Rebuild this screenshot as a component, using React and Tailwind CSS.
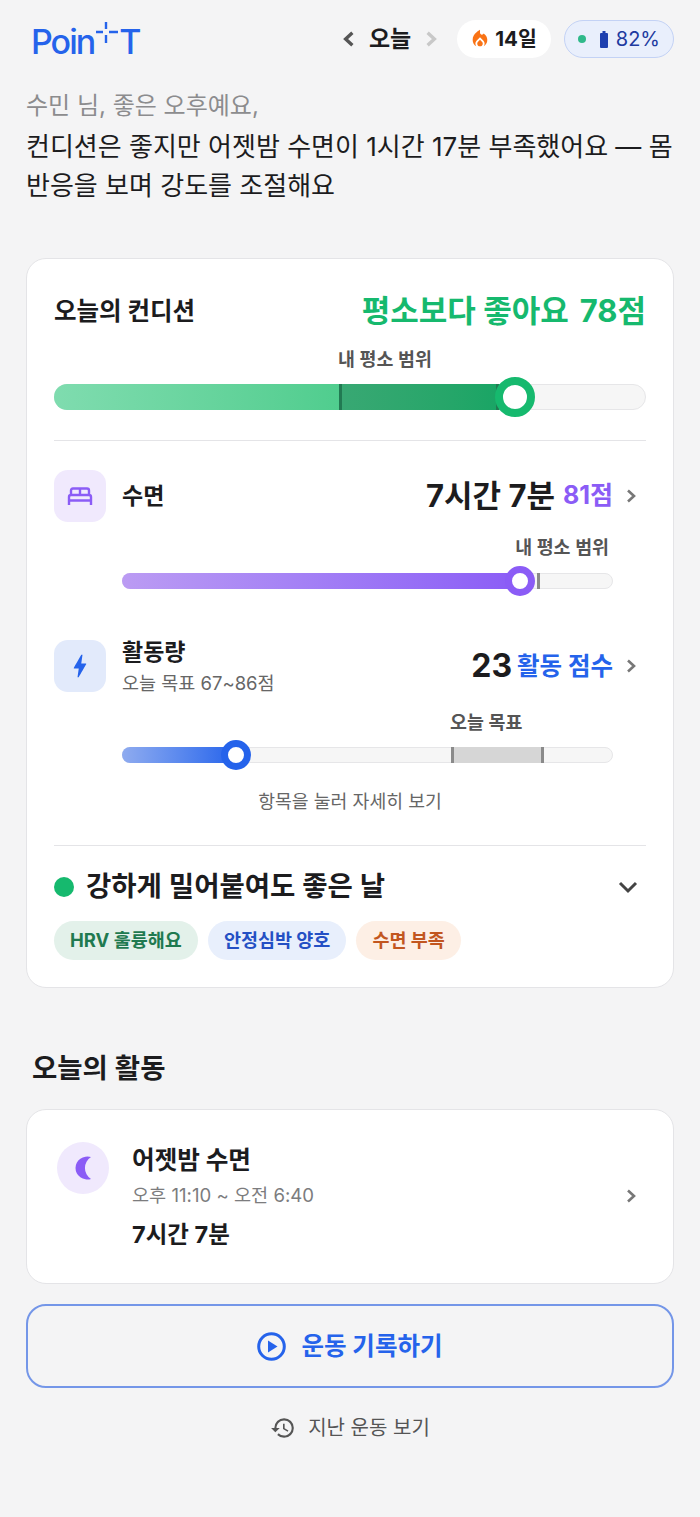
import React from 'react';
import {
    MdBolt,
    MdHistory,
    MdLocalFireDepartment,
} from 'react-icons/md';

const font = 'font-["Inter","Noto_Sans_CJK_KR",sans-serif]';

const Logo = () => (
    <div className="flex items-end h-[38px] translate-y-[3px] text-[#2563eb] text-[34px] leading-[38px] font-medium tracking-[-2px]">
        <span>Poin</span>
        <svg width="25" height="38" viewBox="0 0 25 38" className="shrink-0 mb-[3px]">
            <path d="M2 12H9M15 12H24M12 2V9M12 15V23" stroke="#2563eb" strokeWidth="2.4" fill="none" />
        </svg>
        <span>T</span>
    </div>
);

const Chevron = ({ color = '#777', className = '', w = 12, h = 16, sw = 2.6 }) => (
    <svg width={w} height={h} viewBox="0 0 12 16" className={`shrink-0 ${className}`}>
        <path d="M3 2.5L9 8L3 13.5" stroke={color} strokeWidth={sw} fill="none" />
    </svg>
);

const ExpandIcon = () => (
    <svg width="20" height="14" viewBox="0 0 20 14" className="ml-auto mr-[8px] shrink-0">
        <path d="M2 3L10 11L18 3" stroke="#444" strokeWidth="3" fill="none" />
    </svg>
);

const BatteryIcon = () => (
    <svg width="8" height="17" viewBox="0 0 8 17" className="shrink-0">
        <path d="M2.5 0H5.5V2H7Q8 2 8 3V16Q8 17 7 17H1Q0 17 0 16V3Q0 2 1 2H2.5Z" fill="#1e40af" />
    </svg>
);

const BedIcon = () => (
    <svg width="26" height="18" viewBox="0 0 26 18">
        <path
            d="M4 8V3.5Q4 1.5 6 1.5H20Q22 1.5 22 3.5V8M2 18V10Q2 8 4 8H22Q24 8 24 10V18M2 13.5H24M13 2V8"
            stroke="#8b5cf6"
            strokeWidth="2.4"
            fill="none"
        />
    </svg>
);

const MoonIcon = () => (
    <svg width="20" height="26" viewBox="0 0 20 26">
        <path d="M18 2A12 11.5 0 1 0 18 24A13 13 0 0 1 18 2Z" fill="#8b5cf6" />
    </svg>
);

const PlayIcon = () => (
    <svg width="29" height="29" viewBox="0 0 29 29" className="mr-[15px] shrink-0">
        <circle cx="14.5" cy="14.5" r="12.8" stroke="#2563eb" strokeWidth="3" fill="none" />
        <path d="M11 8.5L20.5 14.5L11 20.5Z" fill="#2563eb" />
    </svg>
);

const Thumb = ({ className }) => (
    <div className={`absolute top-1/2 -translate-y-1/2 -translate-x-1/2 rounded-full bg-white ${className}`} />
);

const App = () => {
    return (
        <div className={`${font} bg-[#f4f4f5] min-h-[1517px] px-[26px] pt-[20px] text-[#1c1c1e]`}>
            {/* top bar */}
            <header className="flex items-center justify-between h-[38px] pl-[5px]">
                <Logo />
                <div className="flex items-center">
                    <Chevron color="#555" w={14} h={18} sw={3} className="rotate-180" />
                    <span className="text-[23px] font-bold mx-[13px]">오늘</span>
                    <Chevron color="#c8c8c8" w={14} h={18} sw={3} />
                    <div className="flex items-center h-[38px] ml-[19px] pl-[12px] pr-[14px] rounded-full bg-white">
                        <MdLocalFireDepartment size={22} className="text-[#f97316]" />
                        <span className="text-[20.5px] font-bold ml-[4px]">14일</span>
                    </div>
                    <div className="flex items-center h-[38px] ml-[13px] px-[13px] rounded-full bg-[#e9effc] border border-[#c3d2f5]">
                        <span className="w-2 h-2 rounded-full bg-[#2fb98a] mr-[14px]" />
                        <BatteryIcon />
                        <span className="text-[20px] text-[#1e3a9f] ml-[8px]">82%</span>
                    </div>
                </div>
            </header>

            {/* greeting */}
            <div className="pt-[28px]">
                <p className="text-[24px] leading-[39px] text-[#8c8c8e]">수민 님, 좋은 오후예요,</p>
                <p className="text-[26px] leading-[39px] mt-[2px] whitespace-nowrap">
                    컨디션은 좋지만 어젯밤 수면이 1시간 17분 부족했어요 — 몸<br />
                    반응을 보며 강도를 조절해요
                </p>
            </div>

            {/* condition card */}
            <section className="mt-[53px] bg-white border border-[#e4e4e7] rounded-[20px] px-[27px] pt-[29px] h-[730px]">
                <div className="flex items-center justify-between h-[46px]">
                    <h2 className="text-[24.5px] font-bold">오늘의 컨디션</h2>
                    <div className="text-[31px] font-bold text-[#16b96e] flex gap-[11px]">
                        <span>평소보다 좋아요</span>
                        <span>78점</span>
                    </div>
                </div>
                <div className="mt-[13px] pl-[284px] text-[18.4px] leading-[24px] font-semibold text-[#555]">
                    내 평소 범위
                </div>
                <div className="relative mt-[13px] h-[26px] rounded-full bg-[#f6f6f6] border border-[#e6e6e8]">
                    <div className="absolute -inset-px right-auto w-[460px] rounded-full bg-gradient-to-r from-[#7fdcaf] to-[#22c47a]" />
                    <div className="absolute -top-px -bottom-px left-[284px] w-[160px] bg-gradient-to-r from-[#38a873] to-[#1aa565] border-x-[3px] border-[#217a52]" />
                    <Thumb className="left-[460px] w-[40px] h-[40px] border-[8px] border-[#16b96e]" />
                </div>
                <div className="mt-[30px] h-px bg-[#e4e4e7]" />

                {/* sleep */}
                <div className="flex items-start mt-[29px]">
                    <div className="w-[52px] h-[52px] rounded-[14px] bg-[#f0e9fd] flex items-center justify-center">
                        <BedIcon />
                    </div>
                    <span className="ml-[16px] text-[23px] leading-[52px] font-bold">수면</span>
                    <div className="ml-auto flex items-center h-[52px]">
                        <span className="text-[31px] font-bold">7시간 7분</span>
                        <span className="ml-[8px] text-[25px] font-bold text-[#8b5cf6]">81점</span>
                        <Chevron className="ml-[12px] mr-[9px]" />
                    </div>
                </div>
                <div className="ml-[68px] mr-[33px]">
                    <div className="text-right text-[18.4px] leading-[24px] font-semibold text-[#555] pr-[4px] mt-[13px]">내 평소 범위</div>
                    <div className="relative mt-[14px] h-[16px] rounded-full bg-[#f6f6f6] border border-[#e6e6e8]">
                        <div className="absolute -inset-px right-auto w-[397px] rounded-full bg-gradient-to-r from-[#bb9bf3] to-[#8b5cf6]" />
                        <div className="absolute -top-px -bottom-px left-[414px] w-[3px] bg-[#8a8a8a]" />
                        <Thumb className="left-[397px] w-[30px] h-[30px] border-[7px] border-[#8b5cf6]" />
                    </div>
                </div>

                {/* activity */}
                <div className="flex items-start mt-[51px]">
                    <div className="w-[52px] h-[52px] rounded-[14px] bg-[#e2eafb] flex items-center justify-center">
                        <MdBolt size={30} className="text-[#2563eb]" />
                    </div>
                    <div className="ml-[16px] -mt-[4px]">
                        <div className="text-[23px] leading-[32px] font-bold">활동량</div>
                        <div className="text-[18.5px] leading-[28px] mt-[1px] text-[#666]">오늘 목표 67~86점</div>
                    </div>
                    <div className="ml-auto flex items-center h-[52px]">
                        <span className="text-[32px] font-bold">23</span>
                        <span className="ml-[5px] text-[24.5px] font-bold text-[#2563eb]">활동 점수</span>
                        <Chevron className="ml-[12px] mr-[9px]" />
                    </div>
                </div>
                <div className="ml-[68px] mr-[33px]">
                    <div className="mt-[13px] pl-[328px] text-[18.4px] leading-[24px] font-semibold text-[#555] whitespace-nowrap">
                        오늘 목표
                    </div>
                    <div className="relative mt-[13px] h-[16px] rounded-full bg-[#f6f6f6] border border-[#e6e6e8]">
                        <div className="absolute -top-px -bottom-px left-[328px] w-[93px] bg-[#d6d6d6] border-x-[3px] border-[#8a8a8a]" />
                        <div className="absolute -inset-px right-auto w-[114px] rounded-full bg-gradient-to-r from-[#8fabef] to-[#2563eb]" />
                        <Thumb className="left-[113px] w-[30px] h-[30px] border-[7px] border-[#2563eb]" />
                    </div>
                </div>
                <div className="mt-[24px] text-center text-[18.3px] leading-[28px] text-[#666]">항목을 눌러 자세히 보기</div>
                <div className="mt-[30px] h-px bg-[#e4e4e7]" />

                {/* status */}
                <div className="flex items-center mt-[20px] h-[42px]">
                    <span className="w-5 h-5 rounded-full bg-[#16b96e]" />
                    <span className="ml-[12px] text-[27.5px] font-semibold">강하게 밀어붙여도 좋은 날</span>
                    <ExpandIcon />
                </div>
                <div className="flex gap-[10px] mt-[13px]">
                    <span className="h-[39px] leading-[39px] px-[16px] rounded-full bg-[#e3f1ea] text-[#1f7a50] text-[18.5px] font-bold">HRV 훌륭해요</span>
                    <span className="h-[39px] leading-[39px] px-[16px] rounded-full bg-[#e8effc] text-[#2450c4] text-[18.5px] font-bold">안정심박 양호</span>
                    <span className="h-[39px] leading-[39px] px-[16px] rounded-full bg-[#fdefe5] text-[#c2561f] text-[18.5px] font-bold">수면 부족</span>
                </div>
            </section>

            {/* today's activity */}
            <h2 className="mt-[61px] ml-[6px] text-[27.5px] leading-[38px] font-semibold">오늘의 활동</h2>
            <section className="mt-[22px] h-[175px] bg-white border border-[#e4e4e7] rounded-[20px] flex items-start pl-[30px] pt-[32px] pr-[27px]">
                <div className="w-[52px] h-[52px] rounded-full bg-[#f0e9fd] flex items-center justify-center">
                    <MoonIcon />
                </div>
                <div className="ml-[23px]">
                    <div className="text-[24.6px] leading-[36px] font-bold">어젯밤 수면</div>
                    <div className="text-[18.6px] leading-[34px] text-[#7c7c7e]">오후 11:10 ~ 오전 6:40</div>
                    <div className="text-[23.5px] leading-[36px] font-bold mt-[5px]">7시간 7분</div>
                </div>
                <Chevron className="ml-auto mt-[46px] mr-[9px]" />
            </section>

            <button className="mt-[20px] w-full h-[84px] rounded-[20px] border-2 border-[#7496e8] flex items-center justify-center text-[#2563eb] text-[24.5px] font-bold">
                <PlayIcon />
                운동 기록하기
            </button>
            <div className="mt-[25px] flex items-center justify-center text-[20px] text-[#555]">
                <MdHistory size={26} className="mr-[12px]" />
                지난 운동 보기
            </div>
        </div>
    );
};

export default App;
